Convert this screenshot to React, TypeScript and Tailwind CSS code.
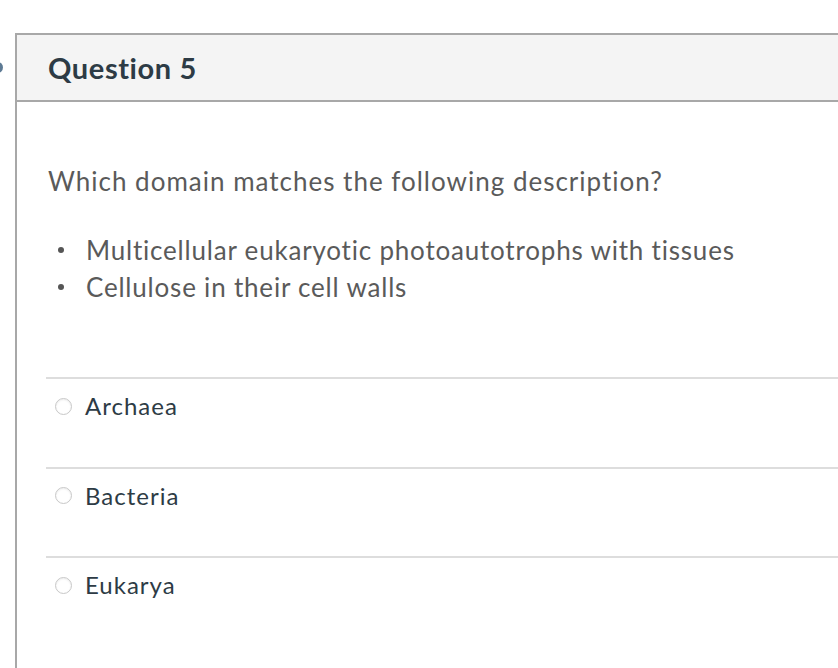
import React from "react";

const font = { fontFamily: "Lato, 'Noto Sans', sans-serif" };

function Option({ label }: { label: string }) {
  return (
    <div className="border-t-2 border-[#dddddd] h-[89.5px] flex items-start">
      <div className="flex items-center mt-[13px] h-[28px]">
        <span className="ml-[9px] w-[17px] h-[17px] rounded-full border border-[#c8c8c8] bg-white shadow-[inset_0_1px_2px_rgba(0,0,0,0.08)]" />
        <span className="ml-[13px] text-[24px] text-[#2d3b45] tracking-[1px] leading-[28px]">{label}</span>
      </div>
    </div>
  );
}

function Bullet({ children }: { children: React.ReactNode }) {
  return (
    <div className="flex items-center h-[36px]">
      <span className="ml-[10px] w-[6px] h-[6px] rounded-full bg-[#555555]" />
      <span className="ml-[22px]">{children}</span>
    </div>
  );
}

export default function App() {
  return (
    <div className="relative w-[838px] h-[668px] overflow-hidden bg-white" style={font}>
      <div className="absolute left-[-8px] top-[62px] w-[11px] h-[11px] rounded-full bg-[#5d7a94]" />
      <div className="pt-[33px] pl-[15px]">
        <div className="w-[900px] h-[700px] border-l-2 border-t-2 border-[#a8a8a8]">
          <div className="h-[67px] bg-[#f4f4f4] border-b-2 border-[#a8a8a8] flex items-center pl-[31px]">
            <h2 className="text-[29px] font-bold text-[#2d3b45] tracking-[0.6px]">Question 5</h2>
          </div>
          <div className="pl-[31px] pt-[64px]">
            <p className="text-[26px] text-[#5a5a5a] tracking-[1px] leading-[30px]">
              Which domain matches the following description?
            </p>
            <div className="mt-[36px] text-[26px] text-[#5a5a5a] tracking-[0.8px]">
              <Bullet>Multicellular eukaryotic photoautotrophs with tissues</Bullet>
              <div className="h-[1px]" />
              <Bullet>Cellulose in their cell walls</Bullet>
            </div>
            <div className="mt-[72px] ml-[-2px]">
              <Option label="Archaea" />
              <Option label="Bacteria" />
              <Option label="Eukarya" />
            </div>
          </div>
        </div>
      </div>
    </div>
  );
}
